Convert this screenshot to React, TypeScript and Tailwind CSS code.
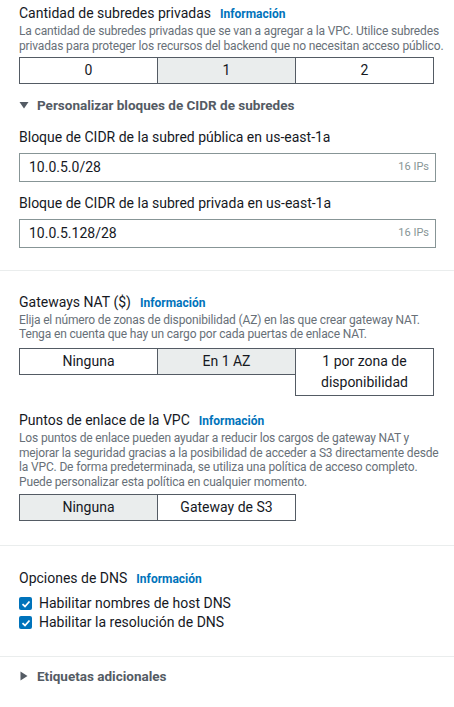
import React from 'react';

const font = { fontFamily: 'Roboto, "Noto Sans", sans-serif' };

function Info() {
  return <span className="ml-[9px] text-[12px] font-bold text-[#0073bb]">Información</span>;
}

function Segmented({ options, selected }: { options: string[]; selected: number }) {
  return (
    <div className="flex items-start w-[416px]">
      {options.map((o, i) => (
        <div
          key={o}
          className={`w-[139px] shrink-0 border border-[#545b64] py-[2px] text-center text-[14px] leading-[21px] text-[#16191f] ${
            i > 0 ? '-ml-px' : ''
          } ${i === selected ? 'bg-[#eaeded]' : 'bg-white'}`}
        >
          {o}
        </div>
      ))}
    </div>
  );
}

function Desc({ lines, leading }: { lines: string[]; leading: string }) {
  return (
    <p className={`whitespace-nowrap text-[12px] tracking-[-0.15px] text-[#687078] ${leading}`}>
      {lines.map((l, i) => (
        <span key={i} className="block">
          {l}
        </span>
      ))}
    </p>
  );
}

function CidrInput({ label, value }: { label: string; value: string }) {
  return (
    <div>
      <div className="text-[14px] leading-[20px] text-[#16191f]">{label}</div>
      <div className="mt-[6px] flex h-[29px] w-[417px] items-center justify-between border border-[#879596] pl-[9px] pr-[6px]">
        <span className="text-[14px] text-[#16191f]">{value}</span>
        <span className="text-[11px] text-[#879596]">16 IPs</span>
      </div>
    </div>
  );
}

function Check({ label }: { label: string }) {
  return (
    <label className="flex items-center gap-[7px] h-[19px]">
      <span className="flex h-[13px] w-[13px] items-center justify-center rounded-[2px] bg-[#0073bb]">
        <svg width="10" height="10" viewBox="0 0 10 10">
          <path d="M1.5 5.2 L4 7.5 L8.5 2.5" stroke="white" strokeWidth="1.8" fill="none" />
        </svg>
      </span>
      <span className="text-[14px] text-[#16191f]">{label}</span>
    </label>
  );
}

export default function App() {
  return (
    <div className="w-[454px] min-h-[707px] bg-white" style={font}>
      {/* Subredes privadas + CIDR */}
      <div className="px-[19px] pt-[3px] pb-[22px]">
        <div className="flex items-baseline text-[14px] leading-[20px] text-[#16191f]">
          Cantidad de subredes privadas <Info />
        </div>
        <Desc
          leading="leading-[15px]"
          lines={[
            'La cantidad de subredes privadas que se van a agregar a la VPC. Utilice subredes',
            'privadas para proteger los recursos del backend que no necesitan acceso público.',
          ]}
        />
        <div className="mt-[3px]">
          <Segmented options={['0', '1', '2']} selected={1} />
        </div>
        <div className="mt-[11px] flex items-center gap-[8px] text-[13.5px] font-bold leading-[20px] text-[#545b64]">
          <svg width="10" height="8" viewBox="0 0 10 8">
            <path d="M0.5 1 L9.5 1 L5 7.5 Z" fill="#545b64" />
          </svg>
          Personalizar bloques de CIDR de subredes
        </div>
        <div className="mt-[12px] flex flex-col gap-[11px]">
          <CidrInput label="Bloque de CIDR de la subred pública en us-east-1a" value="10.0.5.0/28" />
          <CidrInput label="Bloque de CIDR de la subred privada en us-east-1a" value="10.0.5.128/28" />
        </div>
      </div>

      {/* Gateways NAT + puntos de enlace */}
      <div className="border-t border-[#eaeded] px-[19px] pt-[21px] pb-[24px]">
        <div className="flex items-baseline text-[14px] leading-[20px] text-[#16191f]">
          Gateways NAT ($) <Info />
        </div>
        <Desc
          leading="leading-[14px]"
          lines={[
            'Elija el número de zonas de disponibilidad (AZ) en las que crear gateway NAT.',
            'Tenga en cuenta que hay un cargo por cada puertas de enlace NAT.',
          ]}
        />
        <div className="mt-[7px]">
          <Segmented options={['Ninguna', 'En 1 AZ', '1 por zona de disponibilidad']} selected={1} />
        </div>

        <div className="mt-[14px] flex items-baseline text-[14px] leading-[20px] text-[#16191f]">
          Puntos de enlace de la VPC <Info />
        </div>
        <Desc
          leading="leading-[14.5px]"
          lines={[
            'Los puntos de enlace pueden ayudar a reducir los cargos de gateway NAT y',
            'mejorar la seguridad gracias a la posibilidad de acceder a S3 directamente desde',
            'la VPC. De forma predeterminada, se utiliza una política de acceso completo.',
            'Puede personalizar esta política en cualquier momento.',
          ]}
        />
        <div className="mt-[5px]">
          <Segmented options={['Ninguna', 'Gateway de S3']} selected={0} />
        </div>
      </div>

      {/* DNS */}
      <div className="border-t border-[#eaeded] px-[19px] pt-[22px] pb-[24px]">
        <div className="flex items-baseline text-[14px] leading-[20px] text-[#16191f]">
          Opciones de DNS <Info />
        </div>
        <div className="mt-[5px] flex flex-col">
          <Check label="Habilitar nombres de host DNS" />
          <Check label="Habilitar la resolución de DNS" />
        </div>
      </div>

      {/* Etiquetas */}
      <div className="border-t border-[#eaeded] px-[19px] pt-[9px]">
        <div className="flex items-center gap-[8px] text-[13.5px] font-bold leading-[20px] text-[#545b64]">
          <svg width="10" height="10" viewBox="0 0 10 10">
            <path d="M1.5 0.5 L8.5 5 L1.5 9.5 Z" fill="#545b64" />
          </svg>
          Etiquetas adicionales
        </div>
      </div>
    </div>
  );
}
